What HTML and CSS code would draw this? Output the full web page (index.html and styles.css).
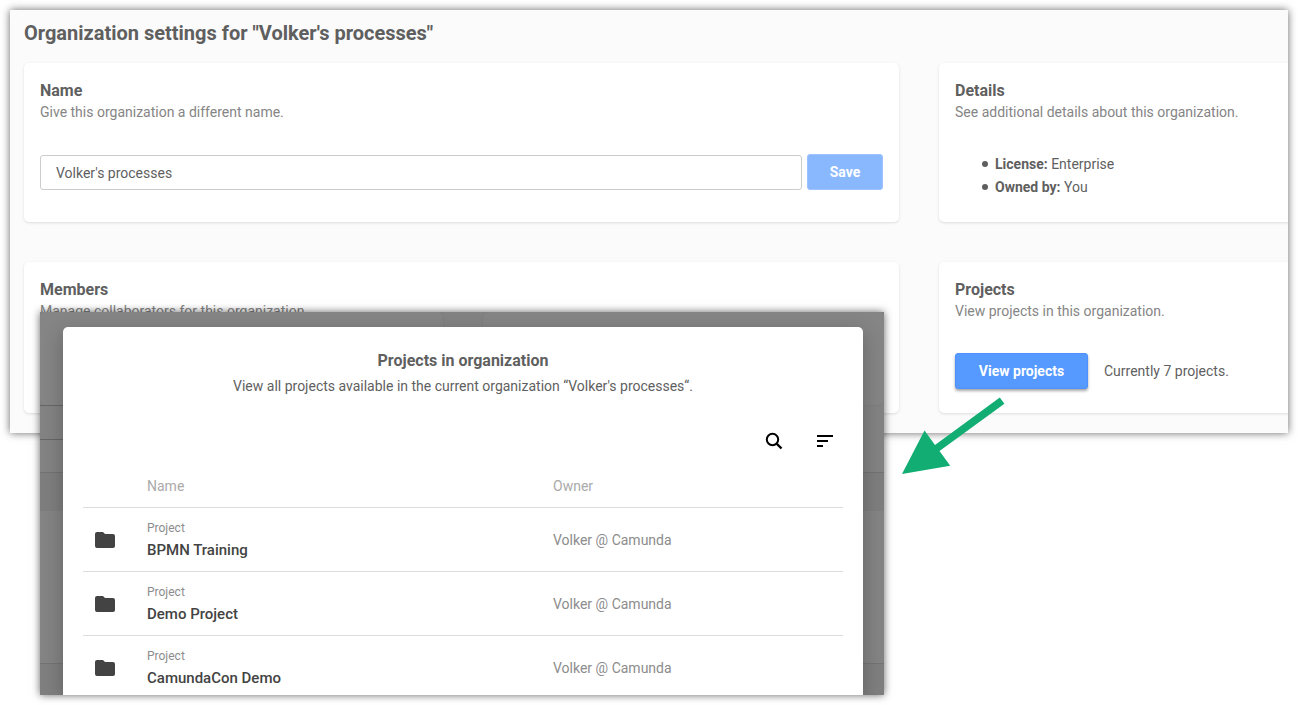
FILE: index.html
```html
<!DOCTYPE html>
<html lang="en">
<head>
<meta charset="utf-8">
<meta name="viewport" content="width=device-width, initial-scale=1">
<title>Organization settings</title>
<link rel="stylesheet" href="styles.css">
</head>
<body>
<div class="page">
  <main class="settings">
    <h1 class="settings-title">Organization settings for "Volker's processes"</h1>
    <div class="cards">
      <section class="card">
        <h2 class="card-title"><label for="org-name">Name</label></h2>
        <p class="card-text">Give this organization a different name.</p>
        <form class="name-form">
          <input class="name-input" id="org-name" type="text" value="Volker's processes">
          <button class="button button-muted" type="button">Save</button>
        </form>
      </section>
      <section class="card card-side">
        <h2 class="card-title">Details</h2>
        <p class="card-text">See additional details about this organization.</p>
        <ul class="details">
          <li><b>License:</b> Enterprise</li>
          <li><b>Owned by:</b> You</li>
        </ul>
      </section>
      <section class="card">
        <h2 class="card-title">Members</h2>
        <p class="card-text">Manage collaborators for this organization.</p>
      </section>
      <section class="card card-side">
        <h2 class="card-title">Projects</h2>
        <p class="card-text">View projects in this organization.</p>
        <div class="project-actions">
          <button class="button button-primary" type="button">View projects</button>
          <span>Currently 7 projects.</span>
        </div>
      </section>
    </div>
  </main>

  <div class="overlay">
    <div class="backdrop">
      <div class="backdrop-cards"><div class="backdrop-card backdrop-card-left"></div><div class="backdrop-card"></div></div>
      <div class="backdrop-row"></div>
      <div class="backdrop-band"></div>
      <div class="backdrop-body"></div>
      <div class="backdrop-foot"></div>
    </div>
    <div class="modal" role="dialog" aria-labelledby="modal-title">
      <h2 class="modal-title" id="modal-title">Projects in organization</h2>
      <p class="modal-text">View all projects available in the current organization “Volker's processes“.</p>
      <div class="tools">
        <button class="tool" type="button" aria-label="Search">
          <svg width="24" height="24" viewBox="0 0 24 24" fill="none" stroke="#000" stroke-width="2"><circle cx="10.500" cy="10.500" r="5.700"/><path d="M14.500 14.500L19.500 19.500" stroke-width="2.400"/></svg>
        </button>
        <button class="tool" type="button" aria-label="Sort">
          <svg width="24" height="24" viewBox="0 0 24 24"><path d="M4 6h16v2H4zM4 11h11v2H4zM4 16h6v2H4z"/></svg>
        </button>
      </div>
      <table class="projects">
        <thead>
          <tr><th class="col-icon"></th><th class="col-name">Name</th><th>Owner</th></tr>
        </thead>
        <tbody>
          <tr>
            <td class="cell-icon"><svg width="20" height="16" viewBox="0 0 20 16"><path d="M2 0h6l2 2h8a2 2 0 0 1 2 2v10a2 2 0 0 1-2 2H2a2 2 0 0 1-2-2V2a2 2 0 0 1 2-2z" fill="#434343"/></svg></td>
            <td><span class="kind">Project</span><span class="project-name">BPMN Training</span></td>
            <td class="owner">Volker @ Camunda</td>
          </tr>
          <tr>
            <td class="cell-icon"><svg width="20" height="16" viewBox="0 0 20 16"><path d="M2 0h6l2 2h8a2 2 0 0 1 2 2v10a2 2 0 0 1-2 2H2a2 2 0 0 1-2-2V2a2 2 0 0 1 2-2z" fill="#434343"/></svg></td>
            <td><span class="kind">Project</span><span class="project-name">Demo Project</span></td>
            <td class="owner">Volker @ Camunda</td>
          </tr>
          <tr>
            <td class="cell-icon"><svg width="20" height="16" viewBox="0 0 20 16"><path d="M2 0h6l2 2h8a2 2 0 0 1 2 2v10a2 2 0 0 1-2 2H2a2 2 0 0 1-2-2V2a2 2 0 0 1 2-2z" fill="#434343"/></svg></td>
            <td><span class="kind">Project</span><span class="project-name">CamundaCon Demo</span></td>
            <td class="owner">Volker @ Camunda</td>
          </tr>
        </tbody>
      </table>
    </div>
  </div>

  <svg class="arrow" width="106" height="80" viewBox="0 0 106 80" aria-hidden="true"><path d="M2 78L24.500 34.500L35 49L99.800 1.500L104.400 7.700L39.500 55L50.200 69.700Z" fill="#11ad72"/></svg>
</div>
</body>
</html>
```
FILE: styles.css
```css
* {
  box-sizing: border-box;
}

body {
  margin: 0;
  background: #fff;
  color: #5f5f5f;
  font-family: Roboto, "Liberation Sans", sans-serif;
  font-size: 14px;
  line-height: 20px;
}

h1, h2, p, ul {
  margin: 0;
}

.page {
  position: relative;
  min-height: 100vh;
  padding: 10px;
  overflow: hidden;
}

.settings {
  padding: 11px 0 20px 14px;
  background: #fbfbfb;
  box-shadow: 0 0 8px rgba(0, 0, 0, 0.6);
  overflow: hidden;
}

.settings-title {
  margin-bottom: 18px;
  font-size: 20px;
  line-height: 24px;
  font-weight: 700;
}

.cards {
  display: grid;
  grid-template-columns: minmax(0, 1fr) 349px;
  grid-template-rows: 159px 151px;
  gap: 40px;
}

.card {
  padding: 17px 16px 16px;
  background: #fff;
  border-radius: 5px;
  box-shadow: 0 1px 3px rgba(0, 0, 0, 0.12);
}

.card-side {
  margin-right: -16px;
}

.card-title {
  font-size: 16px;
  line-height: 22px;
  font-weight: 700;
}

.card-text {
  line-height: 21px;
  color: #858585;
}

.name-form {
  display: flex;
  align-items: center;
  gap: 5px;
  margin-top: 31px;
}

.name-input {
  flex: 1;
  min-width: 0;
  height: 35px;
  padding: 1px 15px 0;
  border: 1px solid #ccc;
  border-radius: 3px;
  background: #fff;
  color: #5f5f5f;
  font: inherit;
}

.button {
  height: 36px;
  padding: 0 21px;
  border: 1px solid #4d90ff;
  border-radius: 3px;
  background: #5699ff;
  color: #fff;
  font: inherit;
  font-weight: 700;
}

.button-muted {
  width: 76px;
  border-color: #9cc2ff;
  background: #8ab8ff;
}

.button-primary {
  width: 133px;
  box-shadow: 0 2px 3px rgba(0, 0, 0, 0.35);
}

.details {
  margin-top: 30px;
  padding-left: 27px;
  line-height: 23px;
  list-style: none;
}

.details li::before {
  content: "";
  display: inline-block;
  width: 6px;
  height: 6px;
  margin-right: 7px;
  border-radius: 50%;
  background: #5f5f5f;
  vertical-align: 2px;
}

.project-actions {
  display: flex;
  align-items: center;
  gap: 16px;
  margin-top: 31px;
}

.overlay {
  position: absolute;
  inset: 312px 414px 10px 40px;
  box-shadow: 0 0 8px rgba(0, 0, 0, 0.6);
}

.backdrop {
  display: flex;
  flex-direction: column;
  height: 100%;
  background: #838383;
  overflow: hidden;
}

.backdrop-cards {
  display: flex;
  gap: 40px;
  height: 93px;
}

.backdrop-card {
  flex: 1;
  background: #858585;
  border-radius: 5px;
  box-shadow: 0 0 2px #777;
}

.backdrop-card-left {
  flex: 0 0 403px;
}

.backdrop-row {
  width: 50%;
  height: 35px;
  margin-bottom: 32px;
  border: solid #666;
  border-width: 1px 0;
}

.backdrop-band {
  height: 39px;
  border-top: 1px solid #737373;
  background: #7e7e7e;
}

.backdrop-body {
  height: 152px;
  background: #848484;
}

.backdrop-foot {
  flex: 1;
  border-top: 1px solid #747474;
  background: #7f7f7f;
}

.modal {
  position: absolute;
  inset: 15px 21px 0 23px;
  padding: 22px 20px 0;
  border-radius: 5px 5px 0 0;
  background: #fff;
  box-shadow: 0 6px 20px rgba(0, 0, 0, 0.25);
  overflow: hidden;
  clip-path: inset(-15px -21px 0 -23px);
}

.modal-title {
  margin-bottom: 3px;
  font-size: 16px;
  line-height: 24px;
  font-weight: 700;
  text-align: center;
}

.modal-text {
  text-align: center;
}

.tools {
  display: flex;
  justify-content: flex-end;
  gap: 27px;
  margin: 33px 6px 12px;
}

.tool {
  display: flex;
  width: 24px;
  height: 24px;
  padding: 0;
  border: 0;
  background: none;
}

.projects {
  width: 100%;
  border-collapse: separate;
  border-spacing: 0;
  table-layout: fixed;
}

.projects th,
.projects td {
  padding: 0;
  border-bottom: 1px solid #ddd;
  text-align: left;
}

.projects th {
  height: 43px;
  color: #aaa;
  font-weight: 400;
}

.projects td {
  height: 64px;
  padding-top: 1px;
}

.col-icon {
  width: 64px;
}

.col-name {
  width: 406px;
}

.projects .cell-icon {
  padding-left: 12px;
}

.cell-icon svg {
  display: block;
}

.kind,
.project-name {
  display: block;
}

.kind {
  color: #8c8c8c;
  font-size: 12px;
}

.project-name {
  color: #434343;
  font-size: 15px;
  line-height: 24px;
  font-weight: 500;
}

.owner {
  color: #8c8c8c;
}

.arrow {
  position: absolute;
  top: 396px;
  right: 292px;
}
```
